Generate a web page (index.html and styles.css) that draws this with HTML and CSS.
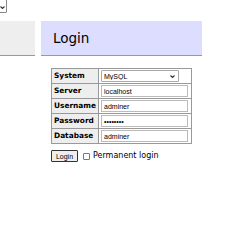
FILE: index.html
```html
<!DOCTYPE html>
<html lang="en">
<head>
    <meta charset="UTF-8">
    <title>Login - Adminer</title>
    <link rel="stylesheet" href="styles.css">
</head>
<body>
    <div class="lang">
        <span class="sel lang-sel">
            <select><option>English</option></select>
            <svg class="arrow" width="5" height="3" viewBox="0 0 5 3"><path d="M0.5 0.5 L2.5 2.5 L4.5 0.5" fill="none" stroke="#333" stroke-width="1.1"/></svg>
        </span>
    </div>
    <div class="page">
        <div class="menu"></div>
        <div class="content">
            <h2>Login</h2>
            <form>
                <table>
                    <tr><th>System</th><td>
                        <span class="sel">
                            <select class="driver"><option>MySQL</option></select>
                            <svg class="arrow" width="5" height="3" viewBox="0 0 5 3"><path d="M0.5 0.5 L2.5 2.5 L4.5 0.5" fill="none" stroke="#333" stroke-width="1.1"/></svg>
                        </span>
                    </td></tr>
                    <tr><th>Server</th><td><input type="text" value="localhost"></td></tr>
                    <tr><th>Username</th><td><input type="text" value="adminer"></td></tr>
                    <tr><th>Password</th><td><input type="password" value="adminer1"></td></tr>
                    <tr><th>Database</th><td><input type="text" value="adminer"></td></tr>
                </table>
                <p class="submit">
                    <button type="button">Login</button>
                    <label><input type="checkbox"> Permanent login</label>
                </p>
            </form>
        </div>
    </div>
</body>
</html>
```
FILE: styles.css
```css
*{
    box-sizing: border-box;
}
body{
    margin: 0;
    font: 8px/1.25 "DejaVu Sans", Verdana, sans-serif;
    color: #000;
    background: #fff;
}
.lang{
    height: 21px;
    overflow: hidden;
}
.sel{
    position: relative;
    display: inline-block;
}
.sel select{
    appearance: none;
    display: block;
    background: #fff;
    border: 1px solid #aaa;
    border-radius: 1px;
    padding: 0 2px;
    font: 7px "Liberation Sans", Arial, sans-serif;
    color: #000;
}
.sel .arrow{
    position: absolute;
    right: 4px;
    top: 5px;
}
.lang-sel{
    margin: -1px 0 0 -43px;
}
.lang-sel select{
    width: 50px;
    height: 14px;
    border-color: #888;
}
.lang-sel .arrow{
    right: 2px;
    top: 7px;
}
.page{
    display: flex;
    gap: 6px;
    align-items: flex-start;
}
.menu{
    width: 35px;
    height: 35px;
    background: #eee;
    border-bottom: 1px solid #999;
}
.content{
    width: 161px;
}
h2{
    margin: 0 0 12px;
    height: 35px;
    padding: 0 12px;
    display: flex;
    align-items: center;
    font-size: 13.5px;
    font-weight: normal;
    background: #ddf;
    border-bottom: 1px solid #999;
}
form{
    margin-left: 10px;
}
table{
    border-collapse: collapse;
    border-top: 1px solid #999;
    border-left: 1px solid #999;
    width: 141px;
}
th, td{
    border-right: 1px solid #999;
    border-bottom: 1px solid #999;
    padding: 1px 2px;
    height: 15px;
}
th{
    background: #eee;
    text-align: left;
    font-size: 7.4px;
    width: 46px;
}
td input{
    display: block;
    width: 87px;
    height: 12px;
    padding: 0 2px;
    font: 7px "Liberation Sans", Arial, sans-serif;
    border: 1px solid #bbb;
}
td select.driver{
    width: 78px;
    height: 12px;
}
.submit{
    margin: 6px 0 0;
    display: flex;
    align-items: center;
    gap: 5px;
}
.submit button{
    height: 12px;
    width: 27px;
    padding: 0;
    font: 7px "Liberation Sans", Arial, sans-serif;
    background: #eee;
    border: 1px solid #333;
    border-radius: 1px;
}
.submit label{
    display: flex;
    align-items: center;
    gap: 1px;
}
.submit input{
    appearance: none;
    width: 7px;
    height: 7px;
    margin: 0 2px 0 0;
    border: 1px solid #777;
    border-radius: 1px;
    background: #fff;
}
```
